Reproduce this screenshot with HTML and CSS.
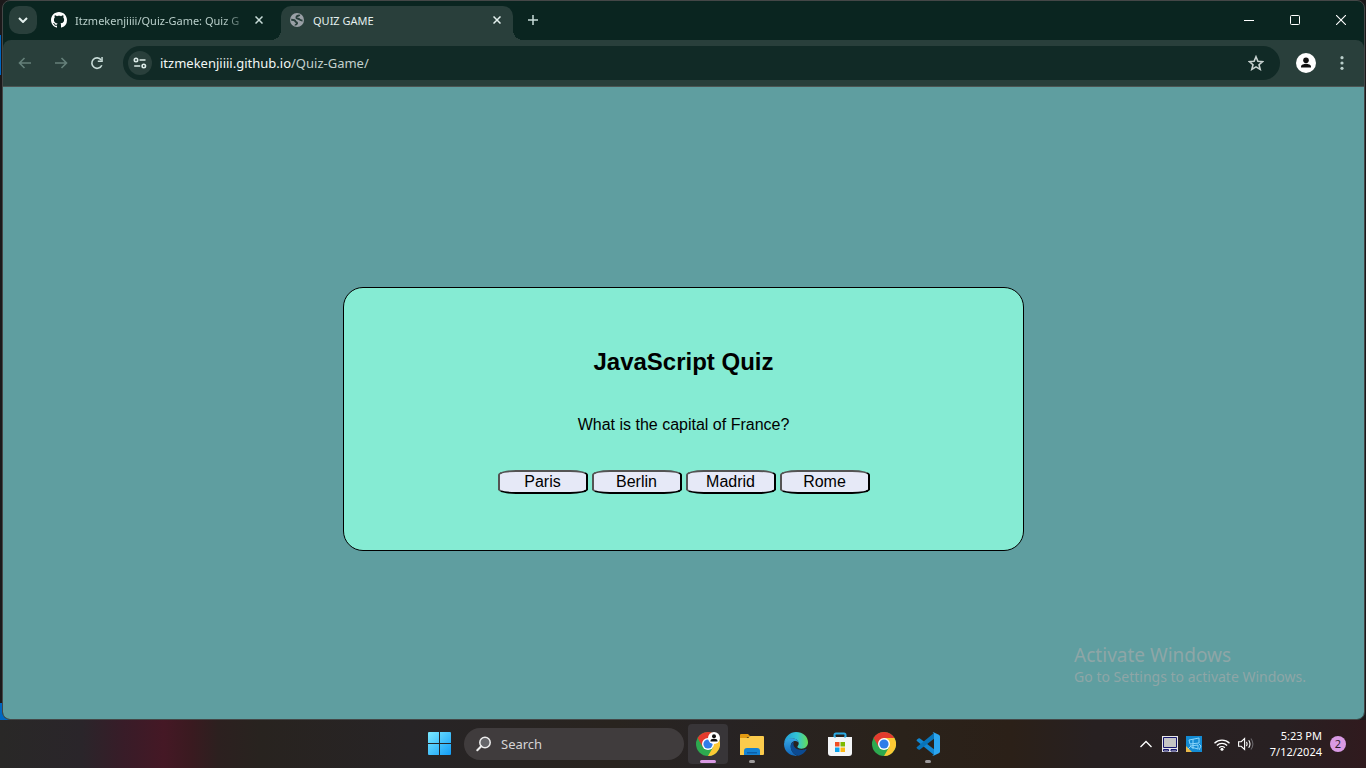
FILE: index.html
```html
<!DOCTYPE html>
<html lang="en">
<head>
<meta charset="utf-8">
<meta name="viewport" content="width=device-width, initial-scale=1">
<title>QUIZ GAME</title>
<link rel="stylesheet" href="styles.css">
</head>
<body>
<div class="desktop">
  <div class="window">
    <header class="tabstrip">
      <button class="tab-search" aria-label="Search tabs"><svg width="10" height="6" viewBox="0 0 10 6"><path d="M1 1l4 4 4-4" fill="none" stroke="#e4f0ee" stroke-width="2"/></svg></button>
      <div class="tab">
        <svg width="16" height="16" viewBox="0 0 16 16"><path fill="#fff" d="M8 0C3.58 0 0 3.58 0 8c0 3.54 2.29 6.53 5.47 7.59.4.07.55-.17.55-.38 0-.19-.01-.82-.01-1.49-2.01.37-2.53-.49-2.69-.94-.09-.23-.48-.94-.82-1.13-.28-.15-.68-.52-.01-.53.63-.01 1.08.58 1.23.82.72 1.21 1.87.87 2.33.66.07-.52.28-.87.51-1.07-1.78-.2-3.64-.89-3.64-3.95 0-.87.31-1.59.82-2.15-.08-.2-.36-1.02.08-2.12 0 0 .67-.21 2.2.82.64-.18 1.32-.27 2-.27s1.36.09 2 .27c1.53-1.04 2.2-.82 2.2-.82.44 1.1.16 1.92.08 2.12.51.56.82 1.27.82 2.15 0 3.07-1.87 3.75-3.65 3.95.29.25.54.73.54 1.48 0 1.07-.01 1.93-.01 2.2 0 .21.15.46.55.38A8.01 8.01 0 0 0 16 8c0-4.42-3.58-8-8-8z"/></svg>
        <span class="tab-title tab-title-fade">Itzmekenjiiii/Quiz-Game: Quiz G</span>
        <button class="tab-close" aria-label="Close Quiz-Game tab"><svg width="8" height="8" viewBox="0 0 8 8"><path d="M.5.5l7 7m0-7l-7 7" stroke="#c8dcd8" stroke-width="1.5"/></svg></button>
      </div>
      <div class="tab tab-active">
        <svg width="16" height="16" viewBox="0 0 16 16"><circle cx="8" cy="8" r="7" fill="#9aa0a6"/><path fill="none" stroke="#293f3b" stroke-width="1.900" stroke-linejoin="round" d="M2.200 7.800c2.300 0 3.800.3 4.300 1.700.2.900 1.600.5 1.600 1.700 0 1.300-1.700.8-1.700 2.300M10.500 2.600c-.2 1.500-2.700.8-3 2.300-.2 1.200 0 1.700 1.600 1.900 1.900.2 1.600 1.900 4.400 1.700"/></svg>
        <span class="tab-title">QUIZ GAME</span>
        <button class="tab-close" aria-label="Close QUIZ GAME tab"><svg width="8" height="8" viewBox="0 0 8 8"><path d="M.5.5l7 7m0-7l-7 7" stroke="#e4f0ee" stroke-width="1.5"/></svg></button>
      </div>
      <button class="new-tab" aria-label="New tab"><svg width="10" height="10" viewBox="0 0 10 10"><path d="M5 0v10M0 5h10" stroke="#c8dcd8" stroke-width="1.5"/></svg></button>
      <div class="window-controls">
        <button aria-label="Minimize"><svg width="10" height="10" viewBox="0 0 10 10"><path d="M0 5.5h10" stroke="#fff"/></svg></button>
        <button aria-label="Maximize"><svg width="10" height="10" viewBox="0 0 10 10"><rect x=".5" y=".5" width="9" height="9" rx="1" fill="none" stroke="#fff"/></svg></button>
        <button aria-label="Close window"><svg width="10" height="10" viewBox="0 0 10 10"><path d="M0 0l10 10M10 0L0 10" stroke="#fff" stroke-width="1.1"/></svg></button>
      </div>
    </header>
    <nav class="toolbar" aria-label="Browser toolbar">
      <button class="nav-button" aria-label="Back"><svg width="14" height="12" viewBox="0 0 14 12"><path d="M13 6H1.5M6.5 1l-5 5 5 5" fill="none" stroke="#65807a" stroke-width="1.6"/></svg></button>
      <button class="nav-button" aria-label="Forward"><svg width="14" height="12" viewBox="0 0 14 12"><path d="M1 6h11.500M7.500 1l5 5-5 5" fill="none" stroke="#65807a" stroke-width="1.6"/></svg></button>
      <button class="nav-button" aria-label="Reload"><svg width="14" height="14" viewBox="0 0 14 14"><path d="M11.8 9.200A5.200 5.200 0 1 1 11.200 4" fill="none" stroke="#c8dcd8" stroke-width="1.600"/><path d="M12.800 1v5H7.800V4.500h3.500V1z" fill="#c8dcd8"/></svg></button>
      <div class="omnibox">
        <button class="site-info" aria-label="View site information"><svg width="14" height="12" viewBox="0 0 14 12"><g fill="none" stroke="#dcebe8" stroke-width="1.600"><circle cx="3" cy="3" r="1.700"/><path d="M6.500 3h6M1.200 9h6"/><circle cx="10.800" cy="9" r="1.700"/></g></svg></button>
        <div class="address"><span class="address-host">itzmekenjiiii.github.io</span>/Quiz-Game/</div>
        <button class="bookmark" aria-label="Bookmark this tab"><svg width="16" height="16" viewBox="0 0 16 16"><path d="M8 1.700l1.900 4.500 4.800.4-3.700 3.100 1.200 4.700L8 11.900l-4.200 2.500L5 9.700 1.300 6.600l4.800-.4z" fill="none" stroke="#c8d2d0" stroke-width="1.600"/></svg></button>
      </div>
      <button class="profile" aria-label="Profile"><svg width="20" height="20" viewBox="0 0 20 20"><circle cx="10" cy="10" r="10" fill="#fff"/><circle cx="10" cy="7.300" r="2.800" fill="#111"/><path d="M5 14.500v-.8c0-2 3.200-2.900 5-2.900s5 .9 5 2.900v.8z" fill="#111"/></svg></button>
      <button class="menu" aria-label="Menu"><svg width="4" height="14" viewBox="0 0 4 14"><g fill="#b9ceca"><circle cx="2" cy="1.700" r="1.600"/><circle cx="2" cy="7" r="1.600"/><circle cx="2" cy="12.300" r="1.600"/></g></svg></button>
    </nav>
    <main class="page">
      <section class="quiz">
        <h2 class="quiz-title">JavaScript Quiz</h2>
        <p class="quiz-question">What is the capital of France?</p>
        <div class="quiz-answers">
          <button class="answer">Paris</button>
          <button class="answer">Berlin</button>
          <button class="answer">Madrid</button>
          <button class="answer">Rome</button>
        </div>
      </section>
    </main>
  </div>
  <footer class="taskbar">
    <div class="apps">
      <button class="app" aria-label="Start"><svg width="24" height="24" viewBox="0 0 24 24"><defs><linearGradient id="win" x2="1" y2="1" gradientUnits="userSpaceOnUse" x1="0" y1="0" gradientTransform="scale(23)"><stop stop-color="#7be9ff"/><stop offset="1" stop-color="#129cf6"/></linearGradient></defs><path fill="url(#win)" d="M1 0h10v11H0V1q0-1 1-1zM12 0h10q1 0 1 1v10H12zM0 12h11v11H1q-1 0-1-1zM12 12h11v10q0 1-1 1H12z"/></svg></button>
      <button class="search"><svg width="16" height="16" viewBox="0 0 16 16"><circle cx="9" cy="6.500" r="5.200" fill="#66666a" stroke="#eee" stroke-width="1.500"/><path d="M5.200 10.300L1.300 14.300" stroke="#eee" stroke-width="2" stroke-linecap="round"/></svg>Search</button>
      <button class="app app-current" aria-label="Google Chrome, profile window"><svg width="24" height="24" viewBox="0 0 24 24"><circle cx="12" cy="12" r="12" fill="#2da94f"/><path fill="#e33b2e" d="M12 12L1.600 6A12 12 0 0 1 22.400 6z"/><path fill="#fcc934" d="M12 6h10.400A12 12 0 0 1 12 24l5.200-9z"/><path fill="#e33b2e" d="M1.600 6L6.800 15 12 6z"/><circle cx="12" cy="12" r="6" fill="#fff"/><circle cx="12" cy="12" r="4.600" fill="#2f7de9"/><circle cx="18" cy="6" r="6" fill="#fff"/><circle cx="18" cy="4.200" r="2" fill="#111"/><path d="M14.500 9.500V8.700q0-2 3.500-2t3.500 2v.8z" fill="#111"/></svg></button>
      <button class="app app-open" aria-label="File Explorer"><svg width="24" height="24" viewBox="0 0 24 24"><path d="M0 3q0-1 1-1h7l3 3h-3l-3 2H0z" fill="#e29a12"/><path d="M0 6h8l2.500-2H23q1 0 1 1v17q0 1-1 1H0z" fill="#fbcb4c"/><path d="M4 23v-4q0-3 3-3h10q3 0 3 3v4z" fill="#1382d3"/><path d="M7 20h10v1.500H7z" fill="#0b5ea8"/></svg></button>
      <button class="app" aria-label="Microsoft Edge"><svg width="24" height="24" viewBox="0 0 24 24"><defs><linearGradient id="edge-top"><stop stop-color="#239ed8"/><stop offset=".55" stop-color="#32c5d5"/><stop offset="1" stop-color="#67dc55"/></linearGradient><linearGradient id="edge-low" x2="0" y2="1"><stop stop-color="#36a7e4"/><stop offset="1" stop-color="#0f64b9"/></linearGradient></defs><path fill="url(#edge-top)" d="M.2 10.500C1.200 4.200 6.200 0 12 0c7 0 12 4.800 12 10.300 0 4-3 6.400-6.300 6.400-3 0-4.300-1.200-4.300-2 0-.8 1.300-1.300 1.300-3.300 0-2.600-2.500-4.800-6.200-4.800C4.500 6.600 1.500 8.500.2 10.500z"/><path fill="url(#edge-low)" d="M.1 11.500C.8 8 4 6.300 7.500 6.300c4.500 0 7.200 2.300 7.200 5 0-1-1.500-2.300-3.500-2.300C8.500 9 6.700 11.500 6.700 14.200c0 4.500 3 8.600 7 9.600C6 24.800-.6 19 .1 11.500z"/><path fill="#0c4a91" d="M10.500 9.200c-2.500.8-4 3.200-3.800 5.800.3 4.800 4 8.300 8 8.700 3.600-.9 6-3.100 7.800-6 .2-.5-.2-.8-.6-.6-1 .5-2.300.9-4 .9-5 0-8.500-2.800-8.500-6 0-1.200.4-2.200 1.100-2.800z"/></svg></button>
      <button class="app" aria-label="Microsoft Store"><svg width="24" height="24" viewBox="0 0 24 24"><path d="M6.500 7V3q0-1.500 1.500-1.500h8q1.500 0 1.500 1.500v4" fill="none" stroke="#2cabe5" stroke-width="2"/><path d="M0 5h24v16q0 3-3 3H3q-3 0-3-3z" fill="#f3f5f7"/><path d="M6.500 5h1M16.500 5h1" stroke="#2cabe5" stroke-width="2"/><path fill="#f04e24" d="M7 10h4.500v4.500H7z"/><path fill="#7db900" d="M12.500 10H17v4.500h-4.500z"/><path fill="#0aa3ee" d="M7 15.500h4.500V20H7z"/><path fill="#fdb813" d="M12.500 15.500H17V20h-4.500z"/></svg></button>
      <button class="app" aria-label="Google Chrome"><svg width="24" height="24" viewBox="0 0 24 24"><circle cx="12" cy="12" r="12" fill="#2da94f"/><path fill="#e33b2e" d="M12 12L1.600 6A12 12 0 0 1 22.400 6z"/><path fill="#fcc934" d="M12 6h10.400A12 12 0 0 1 12 24l5.200-9z"/><path fill="#e33b2e" d="M1.600 6L6.800 15 12 6z"/><circle cx="12" cy="12" r="6" fill="#fff"/><circle cx="12" cy="12" r="4.600" fill="#2f7de9"/></svg></button>
      <button class="app app-open" aria-label="Visual Studio Code"><svg width="24" height="24" viewBox="0 0 24 24"><path d="M1 7.500l1.800-1.200q.6-.3 1.200.1L18 17.200V23L.9 9q-.8-.8.1-1.500z" fill="#1287d1"/><path d="M1 16.500l1.800 1.200q.6.300 1.200-.1L18 6.800V1L.9 15q-.8.800.1 1.500z" fill="#0874b9"/><path d="M17.500.2l5.300 2.500q1.200.5 1.200 1.800v15q0 1.300-1.200 1.800l-5.300 2.500q-.8.200-1.500-.5 2 .5 2-1.500V2.200Q18 .2 16 .7q.7-.7 1.500-.5z" fill="#2ba5ef"/></svg></button>
    </div>
    <div class="tray">
      <button class="tray-chevron" aria-label="Show hidden icons"><svg width="12" height="8" viewBox="0 0 12 8"><path d="M.5 7L6 1.500 11.500 7" fill="none" stroke="#fff" stroke-width="1.300"/></svg></button>
      <button aria-label="Touchpad"><svg width="16" height="16" viewBox="0 0 16 16"><path fill="#e8e8e8" d="M0 0h16v16H0z"/><path d="M1.500 1.500h13v10h-13z" fill="#c4c4c4" stroke="#16166f"/><path d="M1.500 13.500h5V15h-5zM9 13.500h5.500V15H9z" fill="#c4c4c4" stroke="#16166f"/></svg></button>
      <button aria-label="Display settings"><svg width="16" height="16" viewBox="0 0 16 16"><path fill="#138bd3" d="M0 0h16v16H0z"/><path d="M0 10l6 6H0z" fill="#e9b949"/><path d="M3 4l10-2v5l-9 1zM4 10l8-1v4l-7-2zM7 3v10M2 13l3-3M13 8l2 2-2 4" fill="none" stroke="#8bd5fb"/></svg></button>
      <button class="tray-network" aria-label="Network"><svg width="16" height="13" viewBox="0 0 16 13"><g fill="none" stroke="#fff" stroke-width="1.300"><path d="M.5 5.200a10.600 10.600 0 0 1 15 0M2.900 7.500a7.200 7.200 0 0 1 10.200 0M5.200 9.700a4 4 0 0 1 5.600 0"/></g><circle cx="8" cy="11.300" r="1.500" fill="#fff"/></svg></button>
      <button class="tray-volume" aria-label="Volume"><svg width="16" height="14" viewBox="0 0 16 14"><g fill="none" stroke="#fff" stroke-width="1.100"><path d="M.6 4.700h2.600L6.600 1.500v11L3.200 9.300H.6z"/><path d="M8.500 4.900q1.300 2.100 0 4.200M10.700 3.200q2.600 3.800 0 7.600"/><path d="M12.900 1.500q4 5.500 0 11" stroke="#69666a"/></g></svg></button>
      <button class="clock"><time>5:23 PM</time><time>7/12/2024</time></button>
      <button class="notifications" aria-label="2 notifications">2</button>
    </div>
  </footer>
  <aside class="watermark">
    <div class="watermark-title">Activate Windows</div>
    <div class="watermark-text">Go to Settings to activate Windows.</div>
  </aside>
</div>
</body>
</html>
```
FILE: styles.css
```css
* { box-sizing: border-box; }

body {
  margin: 0;
  font-family: "Noto Sans", "Open Sans", sans-serif;
  font-size: 11px;
}

button {
  margin: 0;
  padding: 0;
  border: 0;
  background: none;
  color: inherit;
  font: inherit;
}

svg { display: block; flex: none; }

.desktop {
  position: relative;
  display: flex;
  flex-direction: column;
  min-height: 100vh;
  background: linear-gradient(#0067c0, #0067c0) 0 35px / 1px 40px no-repeat,
    linear-gradient(#0067c0, #0067c0) 0 703px / 28px 17px no-repeat, #1b191a;
}

.window {
  flex: 1;
  display: flex;
  flex-direction: column;
  margin: 0 1px 0 2px;
  border: 1px solid #444747;
  border-radius: 8px;
  overflow: hidden;
  background: #0a2520;
}

/* Tab strip */
.tabstrip {
  display: flex;
  height: 39px;
  padding: 5px 0 0 6px;
}

.tab-search {
  display: grid;
  place-items: center;
  width: 28px;
  height: 28px;
  border-radius: 10px;
  background: #293f3b;
}

.tab {
  display: flex;
  align-items: center;
  width: 232px;
  height: 34px;
  padding: 0 8px 6px;
  gap: 8px;
  color: #b9cfca;
}

.tab:first-of-type { margin-left: 6px; padding-right: 14px; width: 238px; }

.tab-title { flex: 1; white-space: nowrap; }

.tab-title-fade { min-width: 0; mask-image: linear-gradient(90deg, #000 88%, transparent 104%); }

.tab-active {
  position: relative;
  border-radius: 10px 10px 0 0;
  background: #293f3b;
  color: #e4f0ee;
}

/* Flared feet that join the active tab to the toolbar */
.tab-active::before,
.tab-active::after {
  content: "";
  position: absolute;
  bottom: 0;
  width: 10px;
  height: 10px;
}

.tab-active::before { left: -10px; background: radial-gradient(circle at 0 0, transparent 10px, #293f3b 10px); }
.tab-active::after { right: -10px; background: radial-gradient(circle at 100% 0, transparent 10px, #293f3b 10px); }

.tab-close { display: grid; place-items: center; width: 16px; height: 16px; }

.new-tab { display: grid; place-items: center; width: 28px; height: 28px; margin-left: 6px; }

.window-controls { display: flex; margin-left: auto; }
.window-controls button { display: grid; place-items: center; width: 46px; height: 28px; }

/* Toolbar */
.toolbar {
  display: flex;
  align-items: center;
  height: 47px;
  padding: 0 8px 1px 4px;
  border-bottom: 1px solid #4b5553;
  border-radius: 8px 8px 0 0;
  background: #293f3b;
}

.nav-button { display: grid; place-items: center; width: 36px; height: 34px; }

.omnibox {
  flex: 1;
  display: flex;
  align-items: center;
  height: 34px;
  margin: 0 10px 0 8px;
  padding: 0 12px 0 5px;
  border-radius: 17px;
  background: #112a26;
}

.site-info { display: grid; place-items: center; width: 24px; height: 24px; border-radius: 50%; background: #293f3b; }

.address { flex: 1; margin-left: 8px; color: #c3d0cd; font-size: 13px; }
.address-host { color: #f1f7f5; }

.bookmark, .profile, .menu { display: grid; place-items: center; height: 32px; }
.bookmark { width: 24px; }
.profile { width: 32px; }
.menu { width: 28px; margin-left: 6px; }

/* Quiz page */
.page {
  flex: 1;
  padding-top: 200px;
  background: #5f9ea0;
  font-family: "Liberation Sans", Arial, sans-serif;
  font-size: 16px;
}

.quiz {
  width: 50%;
  margin: 0 auto;
  padding: 60px 40px 56px;
  border: 1px solid #000;
  border-radius: 20px;
  background: #85ebd3;
  text-align: center;
}

.quiz-title { margin: 0; font-size: 24px; line-height: 28px; }
.quiz-question { margin: 39px 0 35px; line-height: 20px; }
.quiz-answers { display: flex; justify-content: center; gap: 4px; }

.answer {
  width: 90px;
  height: 24px;
  border: 2px outset #000;
  border-radius: 20%;
  background: #e6e9f7;
  color: #000;
}

/* Taskbar */
.taskbar {
  display: grid;
  grid-template-columns: 1fr auto 1fr;
  align-items: center;
  height: 48px;
  padding-left: 2px;
  background: linear-gradient(90deg, #292827 0, #2a252a 6%, #381c28 9%, #451825 12%, #3a1a20 14%, #2c201f 16%, #28231f 19%, #272426 30%, #29241f 45%, #272324 52%, #2a221a 66%, #2b2018 74%, #272021 80%, #282022 94%, #301a1e 100%);
  color: #fff;
}

.apps { grid-column: 2; display: flex; align-items: center; gap: 4px; }

.app {
  position: relative;
  display: grid;
  place-items: center;
  width: 40px;
  height: 40px;
  border-radius: 4px;
}

.app-current { background: #383538; }

.app-current::after,
.app-open::after {
  content: "";
  position: absolute;
  bottom: 1px;
  left: 50%;
  width: 6px;
  height: 3px;
  border-radius: 2px;
  background: #9d9a9b;
  transform: translateX(-50%);
}

.app-current::after { width: 16px; background: #d99ae4; }

.search {
  display: flex;
  align-items: center;
  gap: 9px;
  width: 220px;
  height: 32px;
  padding-left: 12px;
  border-radius: 16px;
  background: #403c3d;
  color: #d6d4d5;
  font-size: 13px;
}

.tray { display: flex; align-items: center; justify-content: flex-end; gap: 8px; padding-right: 20px; }
.tray-chevron { margin-right: 2px; }
.tray-network { margin-left: 4px; }

.clock {
  display: flex;
  flex-direction: column;
  margin-left: 8px;
  text-align: right;
  line-height: 16px;
}

.notifications {
  width: 16px;
  height: 16px;
  border-radius: 50%;
  background: #d99ae4;
  color: #2b1b2e;
  line-height: 16px;
}

/* Activation notice over the desktop */
.watermark {
  position: absolute;
  right: 60px;
  bottom: 81px;
  color: #8ea6a7;
  pointer-events: none;
}

.watermark-title { font-size: 19px; line-height: 24px; }
.watermark-text { font-size: 14px; line-height: 20px; }
```
